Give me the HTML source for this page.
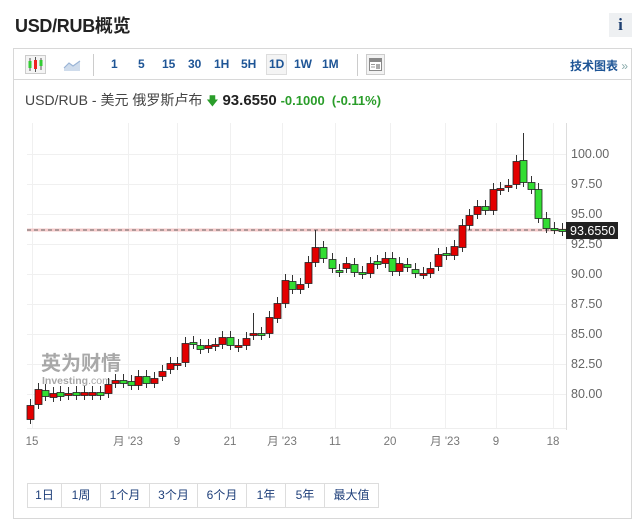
<!DOCTYPE html>
<html><head><meta charset="utf-8"><style>
*{margin:0;padding:0;box-sizing:border-box}
body{width:640px;height:530px;background:#fff;font-family:"Liberation Sans","Noto Sans CJK SC",sans-serif;position:relative;overflow:hidden;color:#333}
.a{position:absolute}
.title{left:15px;top:12px;font-size:18px;font-weight:bold;color:#222;letter-spacing:-0.3px}
.info{left:609px;top:13px;width:23px;height:24px;background:#eef0f2;color:#1e3f70;font:bold 17px "Liberation Serif",serif;text-align:center;line-height:24px}
.box{left:13px;top:48px;width:619px;height:471px;border:1px solid #d8d8d8}
.tb{left:14px;top:49px;width:617px;height:31px;border-bottom:1px solid #d8d8d8}
.tf{top:57px;font-size:12px;font-weight:bold;color:#1e5596}
.sep{top:54px;width:1px;height:22px;background:#ccc}
.btns{left:27px;top:483px;height:25px;display:flex;border:1px solid #ddd}
.btns div{border-right:1px solid #ddd;font-size:12px;color:#1e3f7a;text-align:center;line-height:23px}
.btns div:last-child{border-right:none}
</style></head><body>
<div class="a title">USD/RUB概览</div>
<div class="a info">i</div>
<div class="a box"></div>
<div class="a tb"></div>
<div class="a" style="left:25px;top:55px;width:21px;height:19px;border:1px solid #ccc;background:#f4f4f4"></div>
<svg class="a" style="left:25px;top:55px" width="21" height="19"><line x1="5" y1="3" x2="5" y2="16" stroke="#555"/><rect x="3.5" y="6" width="3" height="7" fill="#3c3"/><line x1="10.5" y1="2" x2="10.5" y2="17" stroke="#555"/><rect x="9" y="5" width="3" height="9" fill="#e22"/><line x1="16" y1="3" x2="16" y2="15" stroke="#555"/><rect x="14.5" y="5" width="3" height="6" fill="#3c3"/></svg>
<svg class="a" style="left:63px;top:58px" width="18" height="14"><path d="M1 10 L6 5 L10 8 L17 3 L17 13 L1 13Z" fill="#cfdcec"/><path d="M1 10 L6 5 L10 8 L17 3" fill="none" stroke="#9bb5d6" stroke-width="1.2"/></svg>
<div class="a sep" style="left:93px"></div>
<div class="a tf" style="left:111px">1</div>
<div class="a tf" style="left:138px">5</div>
<div class="a tf" style="left:162px">15</div>
<div class="a tf" style="left:188px">30</div>
<div class="a tf" style="left:214px">1H</div>
<div class="a tf" style="left:241px">5H</div>
<div class="a" style="left:266px;top:54px;width:21px;height:21px;border:1px solid #ddd;background:#f4f4f4"></div>
<div class="a tf" style="left:269px">1D</div>
<div class="a tf" style="left:294px">1W</div>
<div class="a tf" style="left:322px">1M</div>
<div class="a sep" style="left:357px"></div>
<div class="a" style="left:366px;top:54px;width:19px;height:21px;border:1px solid #ccc;background:#f2f2f2"></div>
<svg class="a" style="left:369px;top:58px" width="13" height="13"><rect x="0.5" y="0.5" width="12" height="12" fill="#fff" stroke="#888"/><rect x="1" y="1" width="11" height="3" fill="#888"/><line x1="2" y1="6.5" x2="6" y2="6.5" stroke="#999"/><line x1="2" y1="9" x2="6" y2="9" stroke="#999"/><rect x="7" y="6" width="4" height="5" fill="#aaa"/></svg>
<div class="a" style="right:12px;top:57px;font-size:12px;font-weight:bold;color:#1e5596">技术图表 <span style="color:#8aa;font-weight:normal">»</span></div>
<div class="a" style="left:25px;top:90px;font-size:14px;color:#444">USD/RUB - 美元 俄罗斯卢布 <span style="color:#2a9d2a;font-size:12px">&#129095;</span> <b style="color:#222;font-size:15px">93.6550</b> <span style="color:#2a9d2a;font-size:13px;font-weight:bold"> -0.1000 &nbsp;(-0.11%)</span></div>
<svg class="a" style="left:0;top:0" width="640" height="530" id="ch">
<g stroke="#f0f0f0" stroke-width="1" id="grid"></g>
<line x1="566.5" y1="123" x2="566.5" y2="430" stroke="#ddd"/>
<line x1="27" y1="428.5" x2="566" y2="428.5" stroke="#eee"/>
<text x="41" y="370" font-family="Liberation Sans,Noto Sans CJK SC,sans-serif" font-size="20" font-weight="bold" fill="#a8a8a8">英为财情</text>
<text x="42" y="384" font-family="Liberation Sans,sans-serif" font-size="10.5" font-weight="bold" fill="#a8a8a8">Investing<tspan font-weight="normal">.com</tspan></text>
<line x1="27" y1="230" x2="566" y2="230" stroke="#f6c9c9" stroke-width="3"/>
<line x1="27" y1="230" x2="566" y2="230" stroke="#666" stroke-dasharray="4,3"/>
<g id="cs"></g>
<rect x="566" y="222" width="52" height="17" fill="#222"/>
<text x="570" y="235" font-family="Liberation Sans,sans-serif" font-size="12.5" fill="#fff">93.6550</text>
<g font-family="Liberation Sans,sans-serif" font-size="12.5" fill="#666" id="yl"></g>
<g font-family="Liberation Sans,Noto Sans CJK SC,sans-serif" font-size="11.5" fill="#777" id="xl"></g>
</svg>
<div class="a btns">
<div style="width:34px">1日</div><div style="width:39px">1周</div><div style="width:49px">1个月</div><div style="width:48px">3个月</div><div style="width:49px">6个月</div><div style="width:39px">1年</div><div style="width:39px">5年</div><div style="width:53px">最大值</div>
</div>
<script>
var ns="http://www.w3.org/2000/svg";
function el(p,t,a,txt){var e=document.createElementNS(ns,t);for(var k in a)e.setAttribute(k,a[k]);if(txt)e.textContent=txt;p.appendChild(e);return e;}
var g=document.getElementById('grid'),yl=document.getElementById('yl'),xl=document.getElementById('xl');
[100,97.5,95,92.5,90,87.5,85,82.5,80].forEach(function(v){var y=154+(100-v)*12;el(g,'line',{x1:27,x2:566,y1:y+.5,y2:y+.5});el(yl,'text',{x:571,y:y+4},v.toFixed(2));});
[[32,"15"],[128,"月 '23"],[177,"9"],[230,"21"],[282,"月 '23"],[335,"11"],[390,"20"],[445,"月 '23"],[496,"9"],[553,"18"]].forEach(function(d){el(g,'line',{x1:d[0]+.5,x2:d[0]+.5,y1:123,y2:428});el(xl,'text',{x:d[0],y:445,'text-anchor':'middle'},d[1]);});
var c=[[30,405,419,'r'],[38,389,404,'r'],[45,390,396,'g'],[53,393,397,'r'],[60,392,396,'g'],[68,393,395,'r'],[76,392,395,'g'],[84,392,395,'r'],[92,392,395,'r'],[100,392,395,'g'],[108,384,393,'r'],[115,380,383,'r'],[123,380,383,'g'],[131,381,385,'g'],[138,376,385,'r'],[146,376,383,'g'],[154,378,383,'r'],[162,371,376,'r'],[170,363,369,'r'],[177,363,365,'r'],[185,343,362,'r'],[193,342,344,'g'],[200,345,349,'g'],[208,345,348,'r'],[215,344,346,'r'],[222,337,344,'r'],[230,337,345,'g'],[238,345,347,'r'],[246,338,345,'r'],[253,333,335,'r',313],[261,333,335,'g'],[269,317,333,'r'],[277,303,318,'r'],[285,280,303,'r'],[292,281,289,'g'],[300,284,289,'r'],[308,262,283,'r'],[315,247,262,'r',230],[323,247,258,'g'],[332,259,268,'g'],[339,270,272,'g'],[346,263,268,'r'],[354,264,272,'g'],[362,272,274,'g'],[370,263,273,'r'],[377,261,264,'g'],[385,258,263,'r'],[392,258,271,'g'],[399,263,271,'r'],[407,264,267,'g'],[415,269,273,'g'],[423,273,274,'r'],[430,268,273,'r'],[438,254,266,'r'],[446,253,255,'g'],[454,246,255,'r'],[462,225,247,'r'],[469,215,225,'r'],[477,206,214,'r'],[485,206,210,'g'],[493,189,210,'r'],[500,188,190,'r'],[508,185,187,'r'],[516,161,184,'r'],[523,160,182,'g',133],[531,182,189,'g'],[538,189,218,'g'],[546,218,228,'g'],[554,228,229,'g'],[562,229,231,'g']];
var cs=document.getElementById('cs');
c.forEach(function(d){var t=d[4]||d[1]-6,b=d[2]+5;el(cs,'line',{x1:d[0]+.5,x2:d[0]+.5,y1:t,y2:b,stroke:'#333'});el(cs,'rect',{x:d[0]-3,y:d[1]+.5,width:7,height:Math.max(2,d[2]-d[1]),fill:d[3]=='r'?'#e30000':'#33dd33',stroke:'#222','stroke-width':.8});});
</script>
</body></html>
